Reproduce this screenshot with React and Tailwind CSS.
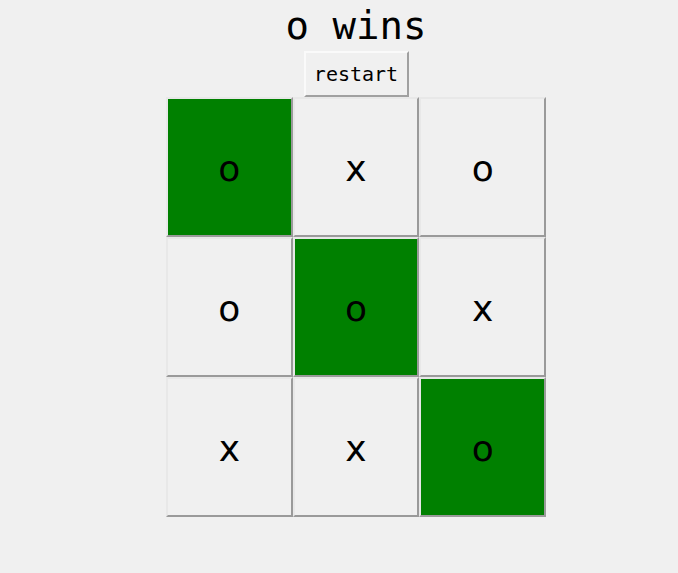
import React from "react";

const board = ["o", "x", "o", "o", "o", "x", "x", "x", "o"];
const winLine = [0, 4, 8];

export default function App() {
  return (
    <div className="min-h-[573px] w-full bg-[#f0f0f0] flex flex-col items-center pl-[34px]">
      <h1 className="text-[39px] leading-[50px] text-black pt-[1px] font-['DejaVu_Sans_Mono',monospace]">
        o wins
      </h1>
      <button className="w-[105px] h-[46px] bg-[#f0f0f0] border-2 border-t-[#fafafa] border-l-[#fafafa] border-b-[#a0a0a0] border-r-[#a0a0a0] text-[20px] text-black font-['DejaVu_Sans_Mono',monospace]">
        restart
      </button>
      <div className="grid grid-cols-3 w-[380px]">
        {board.map((v, i) => (
          <div
            key={i}
            className={
              "h-[140px] flex items-center justify-center pt-[4px] border-2 border-t-[#e8e8e8] border-l-[#e8e8e8] border-b-[#9a9a9a] border-r-[#9a9a9a] text-[36px] text-black font-['DejaVu_Sans',sans-serif] " +
              (winLine.includes(i) ? "bg-[#008000]" : "bg-[#f0f0f0]")
            }
          >
            {v}
          </div>
        ))}
      </div>
    </div>
  );
}
